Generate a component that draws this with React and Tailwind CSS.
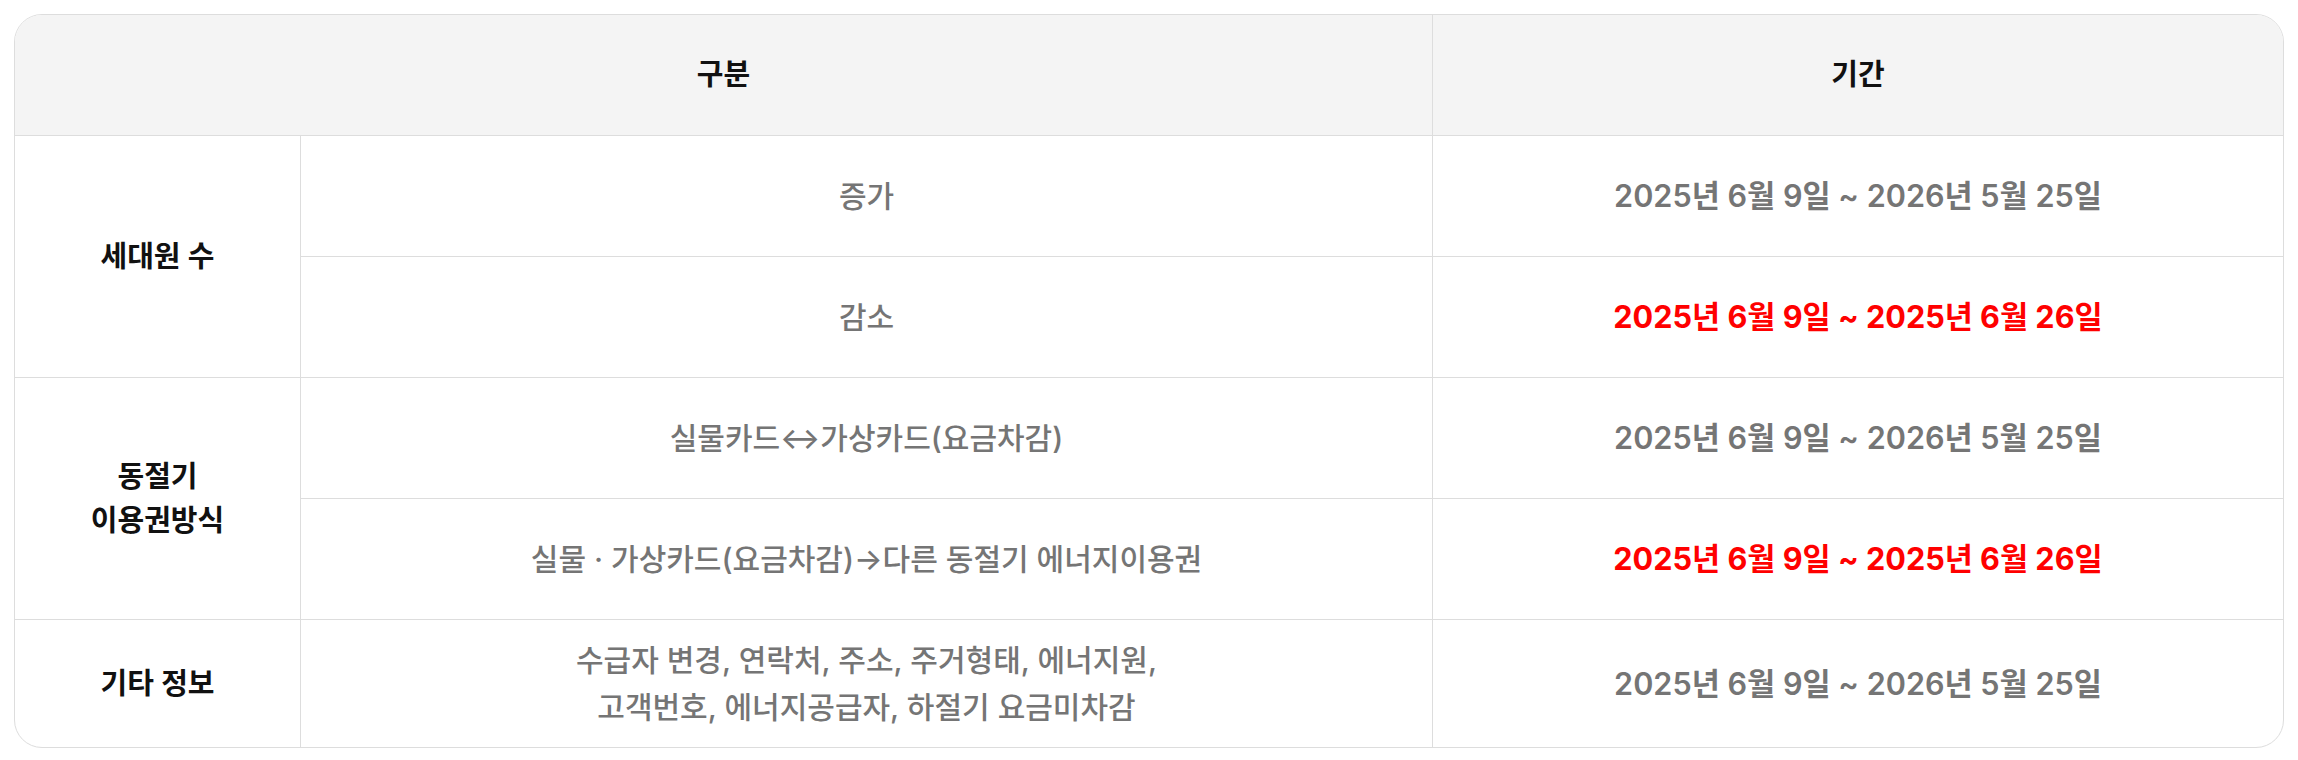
export default function App() {
  const font = { fontFamily: "Inter, 'Noto Sans CJK KR', sans-serif" };
  const cell = "flex items-center justify-center text-center border-t border-[#dddddd]";
  const gray = "text-[#757575] font-medium text-[30px]";
  const date = "text-[#757575] font-semibold text-[30.6px]";
  const red = "text-[#ff0000] font-bold text-[30.6px]";
  const head = "text-[29px] text-[#111]";
  return (
    <div className="w-[2298px] h-[760px] bg-white pt-[14px] px-[14px]" style={font}>
      <div className="w-[2270px] border border-[#dddddd] rounded-[28px] overflow-hidden leading-[44px]">
        <div className="grid grid-cols-[285px_1132px_851px] grid-rows-[120px_121px_121px_121px_121px_128px]">
          <div className={`col-span-2 flex items-center justify-center bg-[#f4f4f4] font-bold ${head}`}>구분</div>
          <div className={`flex items-center justify-center bg-[#f4f4f4] font-bold border-l border-[#dddddd] ${head}`}>기간</div>

          <div className={`${cell} row-span-2 font-semibold ${head}`}>세대원 수</div>
          <div className={`${cell} border-l ${gray}`}>증가</div>
          <div className={`${cell} border-l ${date}`}>2025년 6월 9일 ~ 2026년 5월 25일</div>
          <div className={`${cell} border-l ${gray}`}>감소</div>
          <div className={`${cell} border-l ${red}`}>2025년 6월 9일 ~ 2025년 6월 26일</div>

          <div className={`${cell} row-span-2 font-semibold ${head}`}>동절기<br />이용권방식</div>
          <div className={`${cell} border-l ${gray}`}>실물카드↔가상카드(요금차감)</div>
          <div className={`${cell} border-l ${date}`}>2025년 6월 9일 ~ 2026년 5월 25일</div>
          <div className={`${cell} border-l ${gray}`}>실물 · 가상카드(요금차감)→다른 동절기 에너지이용권</div>
          <div className={`${cell} border-l ${red}`}>2025년 6월 9일 ~ 2025년 6월 26일</div>

          <div className={`${cell} font-semibold ${head}`}>기타 정보</div>
          <div className={`${cell} border-l ${gray} leading-[47px]`}>수급자 변경, 연락처, 주소, 주거형태, 에너지원,<br />고객번호, 에너지공급자, 하절기 요금미차감</div>
          <div className={`${cell} border-l ${date}`}>2025년 6월 9일 ~ 2026년 5월 25일</div>
        </div>
      </div>
    </div>
  );
}
